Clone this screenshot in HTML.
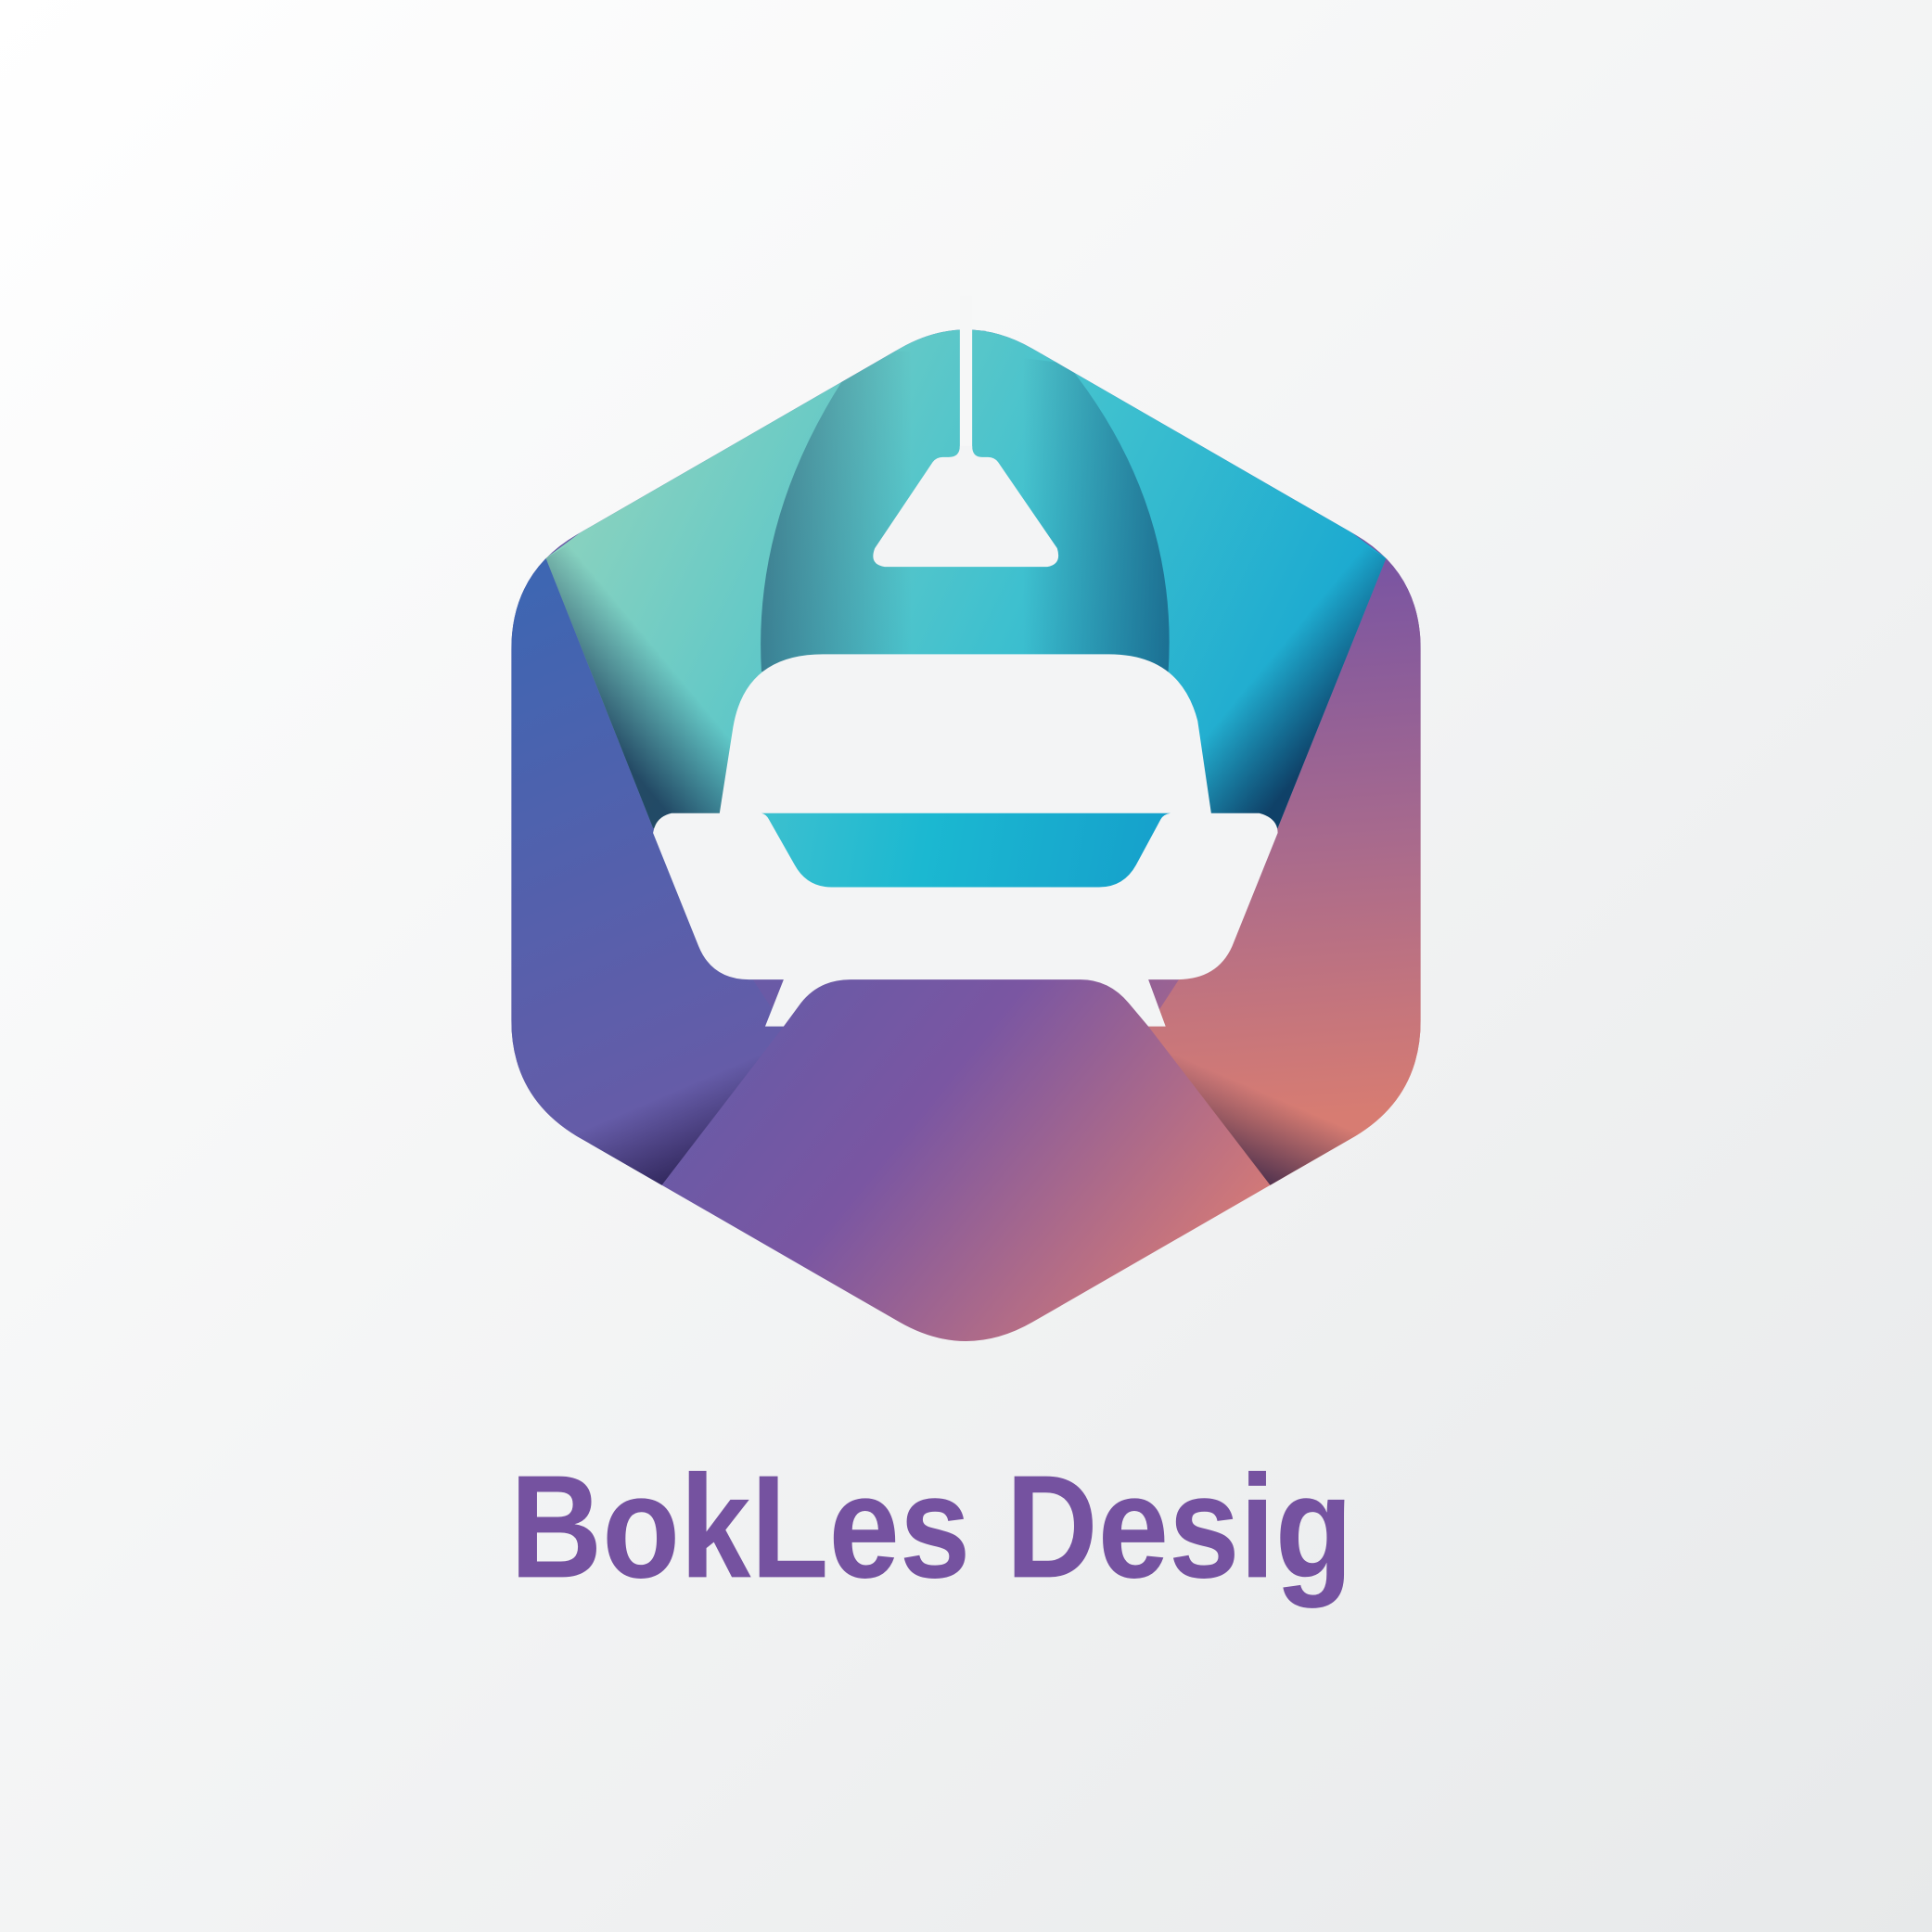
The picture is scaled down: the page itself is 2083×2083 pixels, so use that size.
<!DOCTYPE html>
<html><head><meta charset="utf-8"><style>
html,body{margin:0;padding:0;width:2083px;height:2083px;overflow:hidden}
svg{display:block}
</style></head><body>
<svg width="2083" height="2083" viewBox="0 0 1568 1568" xmlns="http://www.w3.org/2000/svg">
<defs>
<linearGradient id="bg" x1="0" y1="0" x2="1" y2="1">
<stop offset="0" stop-color="#ffffff"/><stop offset="1" stop-color="#e7e9ea"/></linearGradient>
<clipPath id="hex"><path d="M468,434 L730,283 Q784,252 838,283 L1100,434 Q1153,465 1153,527 L1153,828 Q1153,890 1100,922 L838,1073 Q784,1104 730,1073 L468,922 Q415,890 415,828 L415,527 Q415,465 468,434 Z"/></clipPath>
<linearGradient id="gTop" x1="430" y1="300" x2="1140" y2="650" gradientUnits="userSpaceOnUse">
<stop offset="0" stop-color="#9bd6bb"/><stop offset="0.55" stop-color="#3ec0cf"/><stop offset="1" stop-color="#0b9fd0"/></linearGradient>
<linearGradient id="gLeft" x1="415" y1="470" x2="620" y2="950" gradientUnits="userSpaceOnUse">
<stop offset="0" stop-color="#3d66b2"/><stop offset="1" stop-color="#6d5aa6"/></linearGradient>
<linearGradient id="gRight" x1="1120" y1="460" x2="1150" y2="900" gradientUnits="userSpaceOnUse">
<stop offset="0" stop-color="#7a55a2"/><stop offset="0.5" stop-color="#a86a8d"/><stop offset="1" stop-color="#d77c72"/></linearGradient>
<linearGradient id="gBot" x1="620" y1="830" x2="940" y2="1090" gradientUnits="userSpaceOnUse">
<stop offset="0" stop-color="#6a5aa6"/><stop offset="0.35" stop-color="#7a56a2"/><stop offset="1" stop-color="#d57a76"/></linearGradient>
<linearGradient id="gSeat" x1="620" y1="660" x2="950" y2="720" gradientUnits="userSpaceOnUse">
<stop offset="0" stop-color="#3cc0cf"/><stop offset="0.4" stop-color="#1bb8d1"/><stop offset="1" stop-color="#159fcb"/></linearGradient>
<linearGradient id="shL" x1="560" y1="560" x2="500" y2="610" gradientUnits="userSpaceOnUse">
<stop offset="0" stop-color="#0c1f45" stop-opacity="0"/><stop offset="1" stop-color="#0c1f45" stop-opacity="0.75"/></linearGradient>
<linearGradient id="shR" x1="1010" y1="560" x2="1070" y2="610" gradientUnits="userSpaceOnUse">
<stop offset="0" stop-color="#0c1f45" stop-opacity="0"/><stop offset="1" stop-color="#0c1f45" stop-opacity="0.75"/></linearGradient>
<linearGradient id="shBL" x1="560" y1="880" x2="590" y2="950" gradientUnits="userSpaceOnUse">
<stop offset="0" stop-color="#1a1440" stop-opacity="0"/><stop offset="1" stop-color="#1a1440" stop-opacity="0.8"/></linearGradient>
<linearGradient id="shBR" x1="1010" y1="880" x2="980" y2="950" gradientUnits="userSpaceOnUse">
<stop offset="0" stop-color="#1a1440" stop-opacity="0"/><stop offset="1" stop-color="#1a1440" stop-opacity="0.8"/></linearGradient>
<linearGradient id="coneL" x1="620" y1="0" x2="740" y2="0" gradientUnits="userSpaceOnUse">
<stop offset="0" stop-color="#0c2a55" stop-opacity="0.45"/><stop offset="1" stop-color="#0c2a55" stop-opacity="0"/></linearGradient>
<linearGradient id="coneR" x1="950" y1="0" x2="830" y2="0" gradientUnits="userSpaceOnUse">
<stop offset="0" stop-color="#0c2a55" stop-opacity="0.5"/><stop offset="1" stop-color="#0c2a55" stop-opacity="0"/></linearGradient>
</defs>
<rect width="1568" height="1568" fill="url(#bg)"/>
<g clip-path="url(#hex)">
<rect x="400" y="240" width="770" height="880" fill="url(#gBot)"/>
<polygon points="380,420 443,453 530,672 636,833 537,962 380,1000" fill="url(#gLeft)"/>
<polygon points="380,420 443,453 530,672 636,833 537,962 380,1000" fill="url(#shBL)"/>
<polygon points="1188,420 1125,453 1037,672 932,833 1031,962 1188,1000" fill="url(#gRight)"/>
<polygon points="1188,420 1125,453 1037,672 932,833 1031,962 1188,1000" fill="url(#shBR)"/>
<polygon points="443,453 784,200 1125,453 1037,672 784,700 530,672" fill="url(#gTop)"/>
<polygon points="443,453 600,360 620,700 530,672" fill="url(#shL)"/>
<polygon points="1125,453 968,360 950,700 1037,672" fill="url(#shR)"/>
<path d="M700,285 Q610,410 618,545 L784,545 L784,285 Z" fill="url(#coneL)"/>
<path d="M866,295 Q958,410 948,548 L784,548 L784,285 Z" fill="url(#coneR)"/>
</g>
<rect x="779" y="240" width="10" height="124" fill="#f6f7f7"/>
<path d="M779,362 Q779,371 770,371 L765,371 Q760,371 757,375 L710,445 Q705,458 718,460 L850,460 Q862,458 858,445 L810,375 Q807,371 802,371 L797,371 Q789,371 789,362 Z" fill="#f3f4f5"/>
<path d="M545,660 L584,660 L595,590 Q605,531 668,531 L900,531 Q958,531 972,585 L983,660 L1022,660 Q1037,664 1037,676 L1000,768 Q988,795 955,795 L932,795 L946,833 L932,833 L916,814 Q900,795 877,795 L690,795 Q665,795 650,814 L636,833 L621,833 L636,795 L608,795 Q578,795 567,768 L530,676 Q532,663 545,660 Z" fill="#f3f4f5"/>
<path d="M618,660 L950,660 Q944,661 942,665 L922,702 Q912,720 892,720 L675,720 Q655,720 645,702 L624,665 Q622,661 618,660 Z" fill="url(#gSeat)"/>
<text x="414" y="1280" font-family="'Liberation Sans', sans-serif" font-weight="bold" font-size="119" fill="#7552a0" textLength="684" lengthAdjust="spacingAndGlyphs">BokLes Desig</text>
</svg>
</body></html>
